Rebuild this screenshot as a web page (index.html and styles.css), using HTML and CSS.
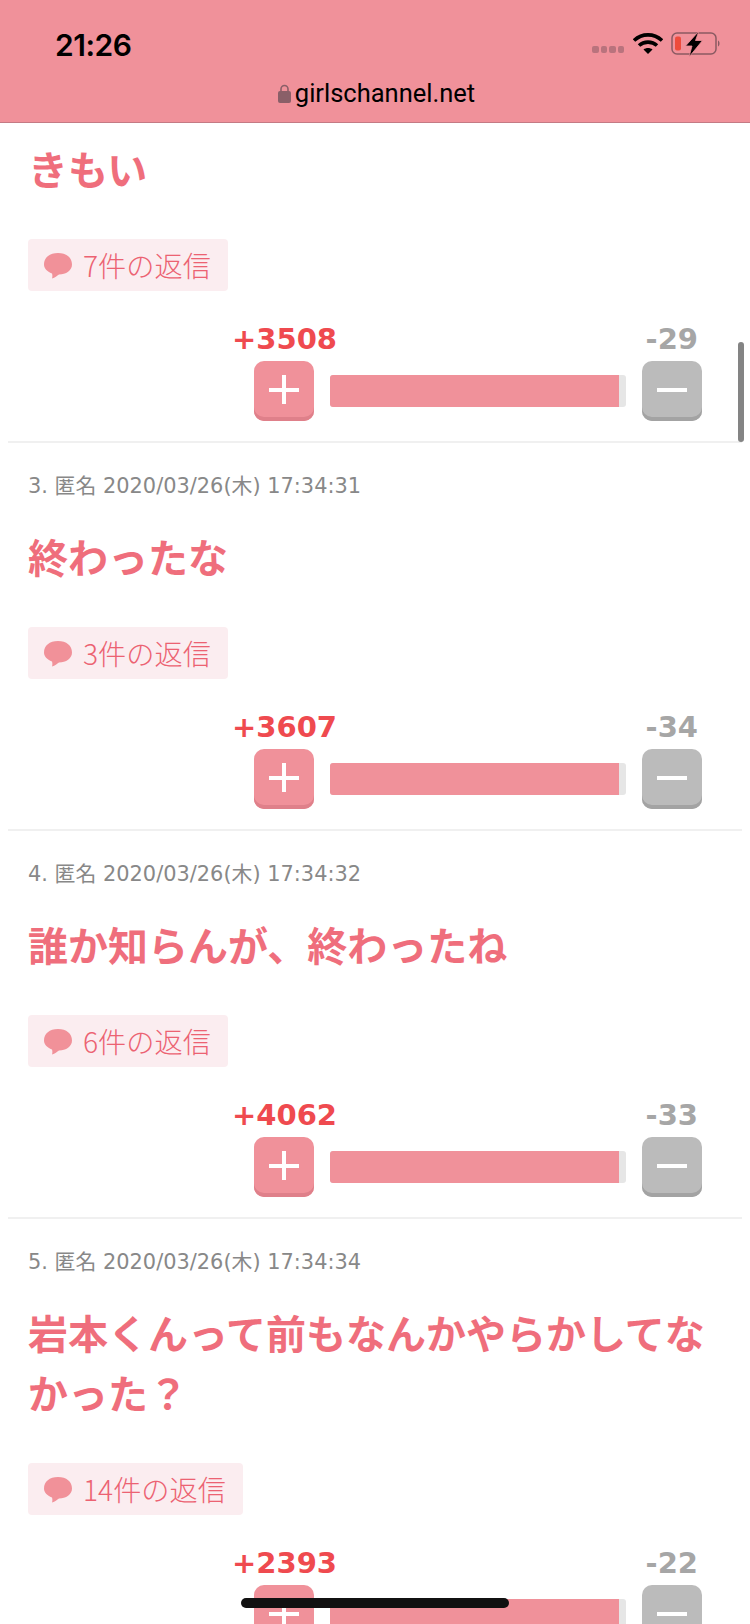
FILE: index.html
```html
<!DOCTYPE html>
<html lang="ja">
<head>
<meta charset="utf-8">
<title>girlschannel.net</title>
<link rel="stylesheet" href="styles.css">
</head>
<body>
<svg class="defs" width="0" height="0" aria-hidden="true">
  <symbol id="bubble" viewBox="0 0 28 26"><path d="M14 0C22.500 0 28 4.500 28 11.500C28 17.500 22 21.500 15 21.500C13 23 11 24.500 8 25.500C8.500 24 8.500 22 8 20.500C3 18.500 0 15.500 0 11.500C0 4.500 5.500 0 14 0Z"/></symbol>
</svg>
<header class="bar">
  <div class="status">
    <span class="time">21:26</span>
    <div class="status-icons">
      <span class="signal"><i></i><i></i><i></i><i></i></span>
      <svg class="wifi" width="30" height="22" viewBox="0 0 30 22"><path d="M1 7.500C9 0 21 0 29 7.500" fill="none" stroke="#000" stroke-width="3.600"/><path d="M6 12.500C11 8 19 8 24 12.500" fill="none" stroke="#000" stroke-width="3.600"/><path d="M10.500 16.500C13 14.500 17 14.500 19.500 16.500L15 21Z" fill="#000"/></svg>
      <svg class="battery" width="50" height="26" viewBox="0 0 50 26"><rect x="1" y="2" width="44" height="21" rx="5" fill="none" stroke="#8a5a62" stroke-width="1.500"/><path d="M47 9.500c2 .8 2 5.200 0 6z" fill="#8a5a62"/><rect x="4" y="5.500" width="6" height="14" rx="2" fill="#ee4b3c"/><path d="M28 0L14.500 15H21L18 26L31.500 9.500H24.500Z" fill="#000" stroke="#f0919a" stroke-width="0.800"/></svg>
    </div>
  </div>
  <div class="url">
    <svg class="lock" width="13" height="19" viewBox="0 0 13 19"><path d="M3 8V5a3.500 3.500 0 0 1 7 0v3" fill="none" stroke="#8a5f68" stroke-width="1.600"/><rect y="7" width="13" height="12" rx="2" fill="#8a5f68"/></svg>
    <span>girlschannel.net</span>
  </div>
</header>
<main class="list">
  <article class="comment first">
    <h2 class="body">きもい</h2>
    <a class="reply"><svg class="bubble"><use href="#bubble"/></svg>7件の返信</a>
    <div class="votes">
      <div class="counts"><span class="plus-n">+3508</span><span class="minus-n">-29</span></div>
      <div class="controls">
        <span class="btn plus"><b class="h"></b><b class="v"></b></span>
        <span class="meter"><span class="fill" style="width:97.5%"></span></span>
        <span class="btn minus"><b class="h"></b></span>
      </div>
    </div>
  </article>
  <article class="comment">
    <p class="meta">3. 匿名 2020/03/26(木) 17:34:31</p>
    <h2 class="body">終わったな</h2>
    <a class="reply"><svg class="bubble"><use href="#bubble"/></svg>3件の返信</a>
    <div class="votes">
      <div class="counts"><span class="plus-n">+3607</span><span class="minus-n">-34</span></div>
      <div class="controls">
        <span class="btn plus"><b class="h"></b><b class="v"></b></span>
        <span class="meter"><span class="fill" style="width:97.5%"></span></span>
        <span class="btn minus"><b class="h"></b></span>
      </div>
    </div>
  </article>
  <article class="comment">
    <p class="meta">4. 匿名 2020/03/26(木) 17:34:32</p>
    <h2 class="body">誰か知らんが、終わったね</h2>
    <a class="reply"><svg class="bubble"><use href="#bubble"/></svg>6件の返信</a>
    <div class="votes">
      <div class="counts"><span class="plus-n">+4062</span><span class="minus-n">-33</span></div>
      <div class="controls">
        <span class="btn plus"><b class="h"></b><b class="v"></b></span>
        <span class="meter"><span class="fill" style="width:97.5%"></span></span>
        <span class="btn minus"><b class="h"></b></span>
      </div>
    </div>
  </article>
  <article class="comment">
    <p class="meta">5. 匿名 2020/03/26(木) 17:34:34</p>
    <h2 class="body">岩本くんって前もなんかやらかしてなかった？</h2>
    <a class="reply"><svg class="bubble"><use href="#bubble"/></svg>14件の返信</a>
    <div class="votes">
      <div class="counts"><span class="plus-n">+2393</span><span class="minus-n">-22</span></div>
      <div class="controls">
        <span class="btn plus"><b class="h"></b><b class="v"></b></span>
        <span class="meter"><span class="fill" style="width:97.5%"></span></span>
        <span class="btn minus"><b class="h"></b></span>
      </div>
    </div>
  </article>
</main>
<div class="scrollbar"></div>
<div class="home"></div>
</body>
</html>
```
FILE: styles.css
```css
* { box-sizing: border-box; }
html, body { margin: 0; padding: 0; height: 1624px; overflow: hidden; background: #fff; }
body { position: relative; font-family: "DejaVu Sans", "Noto Sans CJK JP", sans-serif; }
.defs { position: absolute; }

.bar { height: 123px; background: #f0919a; border-bottom: 1px solid #c47a84; }
.status { height: 70px; padding: 27px 29px 0 55px; display: flex; justify-content: space-between; align-items: flex-start; }
.time { font: 600 30px/36px Inter, sans-serif; color: #000; letter-spacing: -0.5px; }
.status-icons { display: flex; align-items: center; gap: 8px; padding-top: 4px; }
.signal { display: flex; gap: 2px; padding-top: 10px; margin-right: 1px; }
.signal i { width: 6.500px; height: 7px; border-radius: 2px; background: #b9737d; }
.url { display: flex; justify-content: center; align-items: center; gap: 4px; height: 46px; padding-left: 3px; font: 400 25.500px/30px Roboto, sans-serif; color: #000; }
.lock { margin-top: 1px; }

.list { display: flex; flex-direction: column; }
.comment { margin: 0 8px; padding: 0 20px 19px; border-bottom: 2px solid #f0f0f0; height: 388px; }
.comment.first { height: 320px; }
.comment:last-child { border-bottom: 0; height: auto; }
.meta { margin: 0; padding-top: 29px; font-size: 20.900px; line-height: 28px; color: #888; white-space: nowrap; }
.body { margin: 0; padding-top: 26px; font: 700 40px/60px "Noto Sans CJK JP", sans-serif; color: #ef6e7c; }
.first .body { padding-top: 15px; }
.reply { margin-top: 41px; display: flex; width: max-content; align-items: center; height: 52px; padding: 0 17px 0 16px; gap: 11px; border-radius: 4px; background: #fbedf0; font: 300 28.200px/52px "Noto Sans CJK JP", sans-serif; color: #ec6272; }
.bubble { width: 28px; height: 26px; fill: #f19199; margin-top: 2px; }

.votes { margin-top: 30px; margin-left: 226px; width: 448px; }
.counts { display: flex; justify-content: space-between; height: 40px; font-weight: 700; font-size: 29px; line-height: 36px; white-space: nowrap; }
.plus-n { color: #ef4a4f; margin-left: -22px; }
.minus-n { color: #a6a6a6; margin-right: 4px; }
.controls { display: flex; align-items: flex-start; gap: 16px; }
.btn { position: relative; display: block; flex: 0 0 60px; height: 60px; border-radius: 10px; }
.btn.plus { background: #f0919a; box-shadow: inset 0 -4px 0 #df808a; }
.btn.minus { background: #bbb; box-shadow: inset 0 -4px 0 #a3a3a3; }
.btn .h { position: absolute; left: 15px; top: 27px; width: 30px; height: 4px; background: #fff; }
.btn .v { position: absolute; left: 28px; top: 14px; width: 4px; height: 29px; background: #fff; }
.meter { flex: 1; height: 32px; margin-top: 14px; background: #e6e6e6; border-radius: 3px; overflow: hidden; }
.fill { display: block; height: 100%; background: #f0919a; }

.scrollbar { position: absolute; left: 738px; top: 342px; width: 6px; height: 100px; border-radius: 3px; background: #848484; }
.home { position: absolute; left: 241px; top: 1598px; width: 268px; height: 10px; border-radius: 5px; background: #111; }
```
